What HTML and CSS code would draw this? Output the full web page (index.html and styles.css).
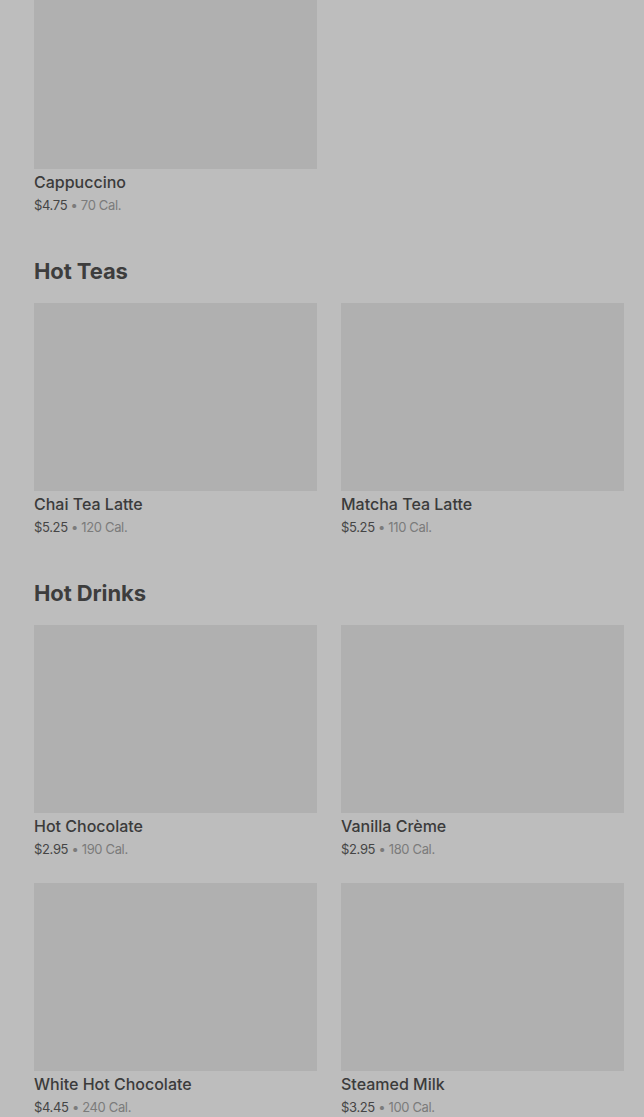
FILE: index.html
```html
<!DOCTYPE html>
<html lang="en">
<head>
    <meta charset="UTF-8">
    <meta name="viewport" content="width=device-width, initial-scale=1.0" />
    <title>Menu</title>
    <link rel="stylesheet" href="styles.css">
</head>
<body>
    <main class="menu">
        <section class="section first">
            <div class="grid">
                <div class="card">
                    <div class="photo"></div>
                    <div class="name">Cappuccino</div>
                    <div class="meta"><span class="price">$4.75</span> • 70 Cal.</div>
                </div>
            </div>
        </section>
        <section class="section">
            <h2>Hot Teas</h2>
            <div class="grid">
                <div class="card">
                    <div class="photo"></div>
                    <div class="name">Chai Tea Latte</div>
                    <div class="meta"><span class="price">$5.25</span> • 120 Cal.</div>
                </div>
                <div class="card">
                    <div class="photo"></div>
                    <div class="name">Matcha Tea Latte</div>
                    <div class="meta"><span class="price">$5.25</span> • 110 Cal.</div>
                </div>
            </div>
        </section>
        <section class="section">
            <h2>Hot Drinks</h2>
            <div class="grid">
                <div class="card">
                    <div class="photo"></div>
                    <div class="name">Hot Chocolate</div>
                    <div class="meta"><span class="price">$2.95</span> • 190 Cal.</div>
                </div>
                <div class="card">
                    <div class="photo"></div>
                    <div class="name">Vanilla Crème</div>
                    <div class="meta"><span class="price">$2.95</span> • 180 Cal.</div>
                </div>
                <div class="card">
                    <div class="photo"></div>
                    <div class="name">White Hot Chocolate</div>
                    <div class="meta"><span class="price">$4.45</span> • 240 Cal.</div>
                </div>
                <div class="card">
                    <div class="photo"></div>
                    <div class="name">Steamed Milk</div>
                    <div class="meta"><span class="price">$3.25</span> • 100 Cal.</div>
                </div>
            </div>
        </section>
    </main>
</body>
</html>
```

FILE: styles.css
```css
html {
    font-family: Inter, "Noto Sans", sans-serif;
    font-size: 14px;
}

body {
    margin: 0;
    background-color: #bdbdbd;
    overflow: hidden;
}

.menu {
    display: flex;
    flex-direction: column;
    gap: 42px;
    padding: 0 20px 0 34px;
}

.section.first {
    margin-top: -19px;
}

h2 {
    margin: 0 0 18px;
    font-size: 22px;
    line-height: 28px;
    font-weight: 700;
    letter-spacing: -0.1px;
    color: #3d3d3d;
}

.grid {
    display: grid;
    grid-template-columns: 1fr 1fr;
    column-gap: 24px;
    row-gap: 24px;
}

.card {
    display: flex;
    flex-direction: column;
    padding-bottom: 1px;
}

.photo {
    height: 188px;
    background-color: #b0b0b0;
    margin-bottom: 3px;
}

.name {
    font-size: 16px;
    line-height: 20px;
    font-weight: 500;
    color: #3b3b3b;
}

.meta {
    margin-top: 4px;
    font-size: 13px;
    line-height: 18px;
    letter-spacing: -0.35px;
    color: #7b7b7b;
}

.price {
    color: #454545;
}
```
